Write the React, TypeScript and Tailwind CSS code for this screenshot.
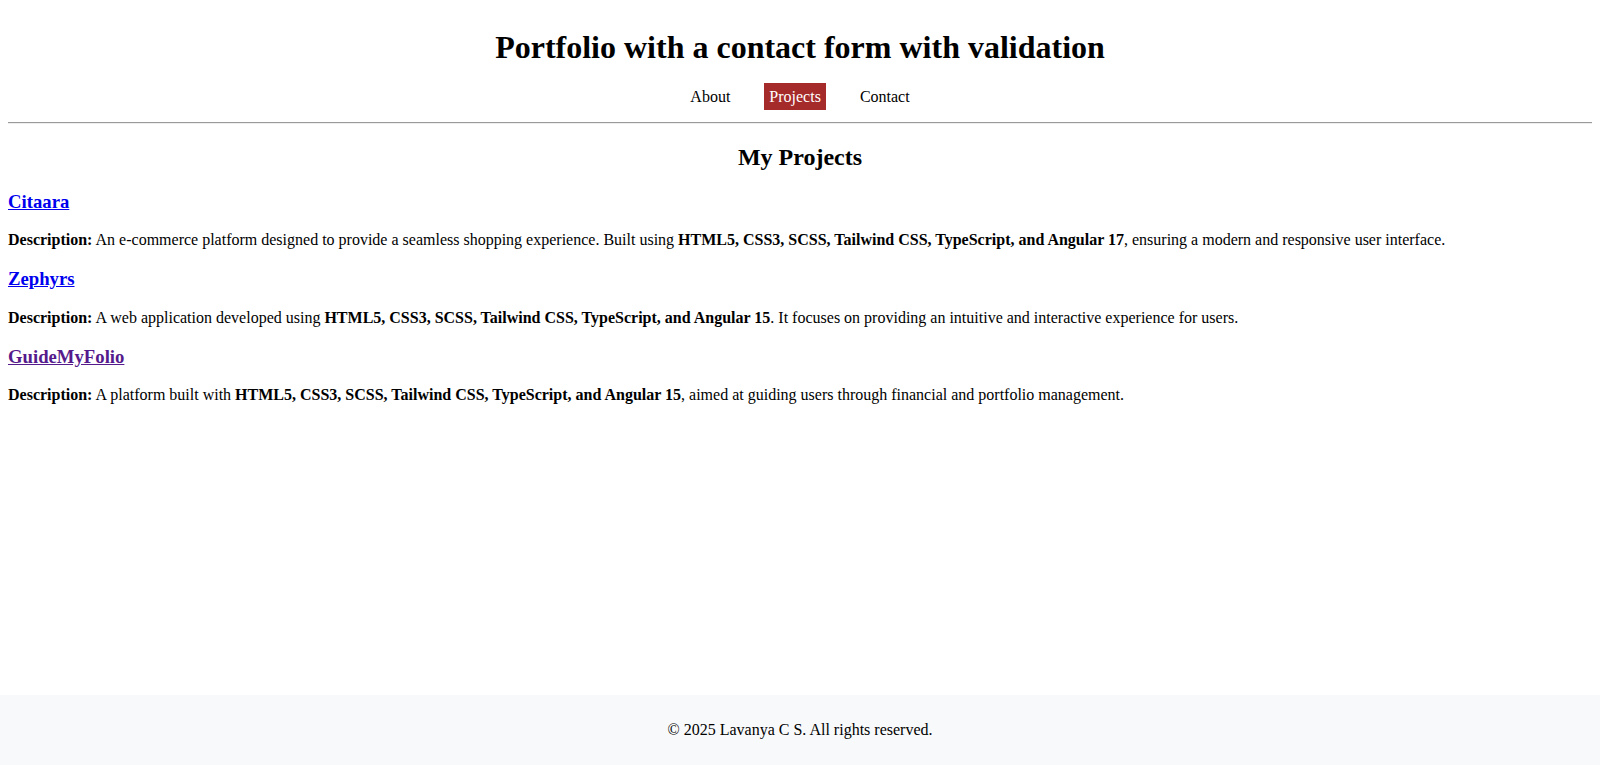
const projects = [
  {
    name: "Citaara",
    visited: false,
    before: "An e-commerce platform designed to provide a seamless shopping experience. Built using ",
    tech: "HTML5, CSS3, SCSS, Tailwind CSS, TypeScript, and Angular 17",
    after: ", ensuring a modern and responsive user interface.",
  },
  {
    name: "Zephyrs",
    visited: false,
    before: "A web application developed using ",
    tech: "HTML5, CSS3, SCSS, Tailwind CSS, TypeScript, and Angular 15",
    after: ". It focuses on providing an intuitive and interactive experience for users.",
  },
  {
    name: "GuideMyFolio",
    visited: true,
    before: "A platform built with ",
    tech: "HTML5, CSS3, SCSS, Tailwind CSS, TypeScript, and Angular 15",
    after: ", aimed at guiding users through financial and portfolio management.",
  },
];

const links = ["About", "Projects", "Contact"];

export default function App() {
  return (
    <div className="flex min-h-screen flex-col bg-white font-['Liberation_Serif','Times_New_Roman',serif] text-[16px] text-black">
      <header className="pt-[29px] text-center">
        <h1 className="text-[32px] font-bold leading-[37px]">
          Portfolio with a contact form with validation
        </h1>
        <nav className="mt-[17px] flex justify-center gap-[29px]">
          {links.map((l) => (
            <a
              key={l}
              href="#"
              className={
                "inline-block px-[5px] py-[5px] leading-[17px] " +
                (l === "Projects" ? "bg-[#a52a2a] text-white" : "text-black")
              }
            >
              {l}
            </a>
          ))}
        </nav>
        <div className="mx-2 mt-[12px] h-[2px] border-t border-[#9a9a9a] bg-[#eeeeee]" />
      </header>

      <main className="flex-1 px-2">
        <h2 className="mt-[19px] mb-[20px] text-center text-[24px] font-bold leading-[28px]">
          My Projects
        </h2>
        {projects.map((p) => (
          <section key={p.name}>
            <h3 className="my-[18.72px] text-[18.72px] font-bold leading-[21.5px]">
              <a
                href="#"
                className={
                  "underline " +
                  (p.visited ? "text-[#551a8b]" : "text-[#0000ee]")
                }
              >
                {p.name}
              </a>
            </h3>
            <p className="my-4 leading-[18.4px]">
              <strong>Description:</strong> {p.before}
              <strong>{p.tech}</strong>
              {p.after}
            </p>
          </section>
        ))}
      </main>

      <footer className="bg-[#f8f9fa] py-[26px] text-center leading-[18px]">
        <p>© 2025 Lavanya C S. All rights reserved.</p>
      </footer>
    </div>
  );
}
